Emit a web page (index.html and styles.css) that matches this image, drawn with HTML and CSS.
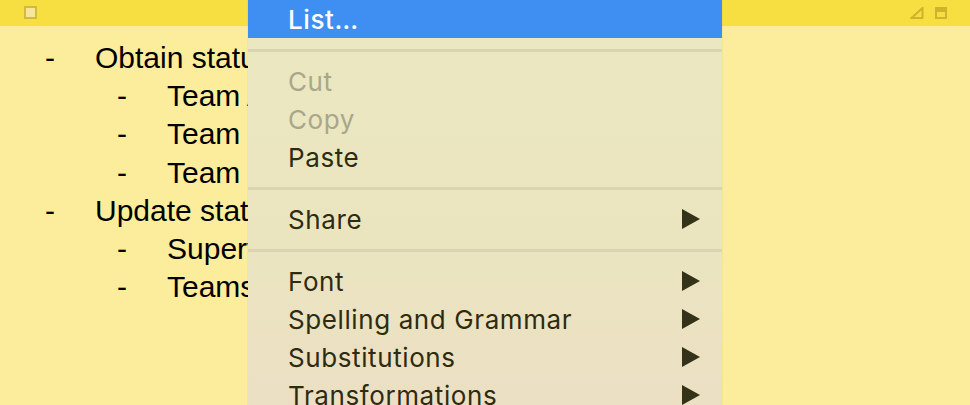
FILE: index.html
```html
<!DOCTYPE html>
<html>
<head>
<meta charset="utf-8">
<link rel="stylesheet" href="styles.css">
</head>
<body>
<div class="note">
  <div class="titlebar">
    <span class="close-box"></span>
    <div class="title-icons">
      <svg class="tri" width="14" height="12" viewBox="0 0 14 12"><path d="M12.5 1 L12.5 11 L1.5 11 Z" fill="none" stroke="#cdb42c" stroke-width="2" stroke-linejoin="miter"/></svg>
      <svg class="win" width="12" height="12" viewBox="0 0 12 12"><rect x="1" y="1" width="10" height="10" fill="none" stroke="#cdb42c" stroke-width="2"/><rect x="1" y="1" width="10" height="4" fill="#cdb42c"/></svg>
    </div>
  </div>
  <div class="body">
    <ul class="lvl1">
      <li><span class="dash">-</span><span>Obtain status reports</span></li>
      <li class="sub"><span class="dash">-</span><span>Team A</span></li>
      <li class="sub"><span class="dash">-</span><span>Team B</span></li>
      <li class="sub"><span class="dash">-</span><span>Team C</span></li>
      <li><span class="dash">-</span><span>Update status board</span></li>
      <li class="sub"><span class="dash">-</span><span>Supervisors</span></li>
      <li class="sub"><span class="dash">-</span><span>Teams</span></li>
    </ul>
  </div>
</div>

<div class="menu">
  <div class="item selected">List…</div>
  <div class="sep"></div>
  <div class="item disabled">Cut</div>
  <div class="item disabled">Copy</div>
  <div class="item">Paste</div>
  <div class="sep"></div>
  <div class="item"><span>Share</span><svg class="arrow" width="18" height="20" viewBox="0 0 18 20"><path d="M0 0 L18 10 L0 20 Z"/></svg></div>
  <div class="sep"></div>
  <div class="item"><span>Font</span><svg class="arrow" width="18" height="20" viewBox="0 0 18 20"><path d="M0 0 L18 10 L0 20 Z"/></svg></div>
  <div class="item"><span>Spelling and Grammar</span><svg class="arrow" width="18" height="20" viewBox="0 0 18 20"><path d="M0 0 L18 10 L0 20 Z"/></svg></div>
  <div class="item"><span>Substitutions</span><svg class="arrow" width="18" height="20" viewBox="0 0 18 20"><path d="M0 0 L18 10 L0 20 Z"/></svg></div>
  <div class="item"><span>Transformations</span><svg class="arrow" width="18" height="20" viewBox="0 0 18 20"><path d="M0 0 L18 10 L0 20 Z"/></svg></div>
</div>
</body>
</html>
```

FILE: styles.css
```css
html, body {
  margin: 0;
  padding: 0;
}
body {
  width: 970px;
  height: 405px;
  overflow: hidden;
  position: relative;
  background: #fbed9b;
  font-family: "Liberation Sans", Arial, sans-serif;
}
.note {
  display: flex;
  flex-direction: column;
  height: 405px;
}
.titlebar {
  height: 26px;
  background: #f7de41;
  display: flex;
  align-items: center;
  justify-content: space-between;
  padding: 0 23px 0 24px;
  flex-shrink: 0;
}
.close-box {
  width: 9px;
  height: 9px;
  border: 2px solid #d4bb36;
  background: #f4e69a;
  margin-top: -1px;
}
.title-icons {
  display: flex;
  align-items: center;
  gap: 11px;
  margin-top: -1px;
}
.body {
  padding-top: 13px;
}
.lvl1 {
  list-style: none;
  margin: 0;
  padding: 0;
}
.lvl1 li {
  display: flex;
  height: 38.2px;
  align-items: center;
  font-size: 30px;
  color: #000;
  white-space: nowrap;
  padding-left: 45px;
}
.lvl1 li.sub {
  padding-left: 117px;
}
.dash {
  width: 50px;
  flex-shrink: 0;
}
.menu {
  position: absolute;
  left: 248px;
  top: 0;
  width: 474px;
  height: 420px;
  background: linear-gradient(to bottom, #ebe8c0 0%, #eae5bf 55%, #ecdfc4 100%);
  box-shadow: 0 0 1px rgba(120, 110, 60, 0.25);
  font-family: Inter, "Noto Sans", sans-serif;
  font-size: 26px;
  letter-spacing: 0.6px;
  color: #2e2b12;
}
.item {
  height: 38px;
  display: flex;
  align-items: center;
  justify-content: space-between;
  padding: 0 22px 0 40px;
  white-space: nowrap;
}
.item.selected {
  background: #3f8ef1;
  color: #fff;
  font-weight: 500;
}
.item.disabled {
  color: #a9a68c;
}
.sep {
  height: 24px;
  display: flex;
  align-items: center;
}
.sep::before {
  content: "";
  display: block;
  width: 100%;
  height: 3px;
  background: #d9d5b0;
}
.arrow path {
  fill: #35321a;
}
```
